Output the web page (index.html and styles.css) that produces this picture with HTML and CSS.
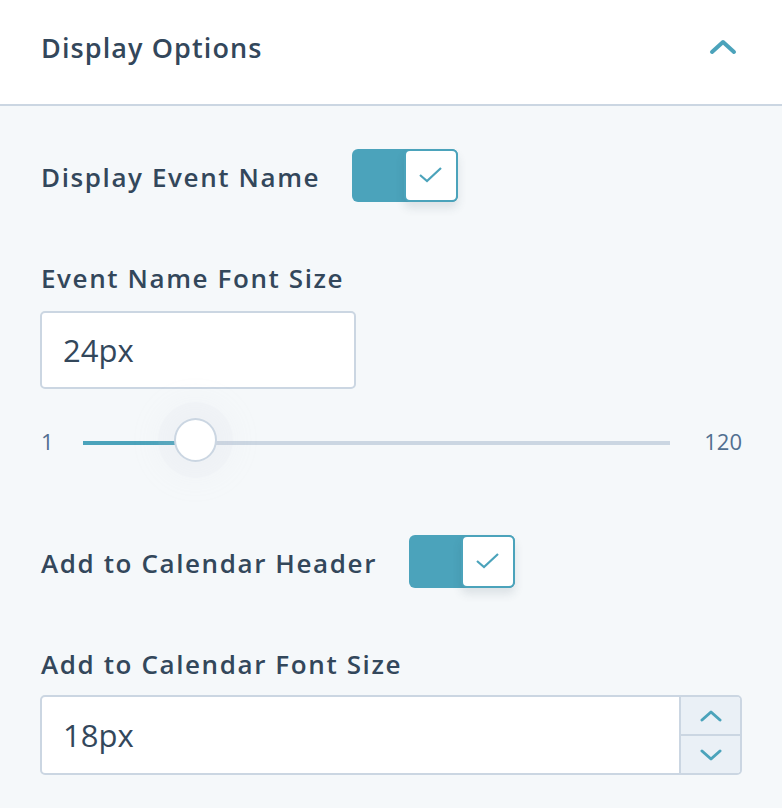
FILE: index.html
```html
<!DOCTYPE html>
<html lang="en">
<head>
    <meta charset="UTF-8">
    <title>Display Options</title>
    <link rel="stylesheet" href="styles.css">
</head>
<body>
    <div class="panel">
        <div class="panel-head">
            <h2 class="panel-title">Display Options</h2>
            <svg class="collapse" width="28" height="16" viewBox="0 0 28 16">
                <path d="M3 13 L14 3 L25 13" fill="none" stroke="#4ba3bb" stroke-width="4" stroke-linecap="round" stroke-linejoin="round"/>
            </svg>
        </div>
        <div class="panel-body">
            <div class="toggle-row first">
                <span class="label">Display Event Name</span>
                <span class="toggle">
                    <span class="knob">
                        <svg width="26" height="18" viewBox="0 0 26 18"><path d="M2 9 L9 15 L23 2" fill="none" stroke="#4ba3bb" stroke-width="2.2"/></svg>
                    </span>
                </span>
            </div>

            <div class="label field-label">Event Name Font Size</div>
            <div class="text-input short">24px</div>

            <div class="slider">
                <span class="slider-num">1</span>
                <div class="track">
                    <div class="fill" style="width: 112px"></div>
                    <div class="thumb" style="left: 112px"></div>
                </div>
                <span class="slider-num">120</span>
            </div>

            <div class="toggle-row">
                <span class="label">Add to Calendar Header</span>
                <span class="toggle">
                    <span class="knob">
                        <svg width="26" height="18" viewBox="0 0 26 18"><path d="M2 9 L9 15 L23 2" fill="none" stroke="#4ba3bb" stroke-width="2.2"/></svg>
                    </span>
                </span>
            </div>

            <div class="label field-label last">Add to Calendar Font Size</div>
            <div class="number-input">
                <div class="number-value">18px</div>
                <div class="stepper">
                    <span class="step">
                        <svg width="22" height="12" viewBox="0 0 22 12"><path d="M2 10 L11 2 L20 10" fill="none" stroke="#4ba3bb" stroke-width="3" stroke-linecap="round" stroke-linejoin="round"/></svg>
                    </span>
                    <span class="step">
                        <svg width="22" height="12" viewBox="0 0 22 12"><path d="M2 2 L11 10 L20 2" fill="none" stroke="#4ba3bb" stroke-width="3" stroke-linecap="round" stroke-linejoin="round"/></svg>
                    </span>
                </div>
            </div>
        </div>
    </div>
</body>
</html>
```

FILE: styles.css
```css
* {
    margin: 0;
    padding: 0;
    box-sizing: border-box;
}
body {
    background: #f5f8fa;
    font-family: "Open Sans", "Lato", sans-serif;
    color: #33475b;
}
.panel {
    width: 782px;
    height: 808px;
    background: #f5f8fa;
}
.panel-head {
    height: 106px;
    background: #ffffff;
    border-bottom: 2px solid #cbd6e2;
    display: flex;
    align-items: center;
    justify-content: space-between;
    padding: 0 45px 10px 41px;
}
.panel-title {
    font-size: 27px;
    font-weight: 600;
    letter-spacing: 1.1px;
    color: #33475b;
}
.panel-body {
    padding: 43px 41px 0 40px;
    display: flex;
    flex-direction: column;
    align-items: flex-start;
}
.label {
    font-size: 26px;
    font-weight: 600;
    letter-spacing: 1.6px;
    color: #33475b;
    line-height: 32px;
    padding-left: 1px;
}
.toggle-row {
    display: flex;
    align-items: center;
    gap: 32px;
    height: 52px;
}
.toggle-row .label {
    margin-top: 4px;
}
.toggle-row + .field-label {
    margin-top: 61px;
}
.toggle {
    width: 106px;
    height: 53px;
    background: #4ba3bb;
    border-radius: 6px;
    display: flex;
    justify-content: flex-end;
}
.knob {
    width: 54px;
    height: 53px;
    background: #ffffff;
    border: 2px solid #4ba3bb;
    border-radius: 6px;
    display: flex;
    align-items: center;
    justify-content: center;
    box-shadow: 0 6px 10px rgba(45, 62, 80, 0.12);
}
.field-label {
    margin-bottom: 17px;
}
.field-label.last {
    margin-bottom: 15px;
}
.text-input {
    width: 316px;
    height: 78px;
    background: #ffffff;
    border: 2px solid #cbd6e2;
    border-radius: 5px;
    font-size: 31px;
    line-height: 74px;
    padding-left: 21px;
}
.slider {
    width: 702px;
    display: flex;
    align-items: center;
    margin-top: 30px;
    height: 44px;
}
.slider-num {
    font-size: 22px;
    color: #516f90;
    width: 43px;
    padding-left: 1px;
}
.slider-num:last-child {
    width: auto;
    margin-left: 33px;
}
.track {
    flex: 1;
    height: 4px;
    background: #cbd6e2;
    position: relative;
    margin-top: 4px;
}
.fill {
    height: 4px;
    background: #4ba3bb;
}
.thumb {
    position: absolute;
    top: -23px;
    width: 43px;
    height: 44px;
    margin-left: -21px;
    border-radius: 50%;
    background: #ffffff;
    border: 2px solid #cbd6e2;
    box-shadow: 0 0 0 16px rgba(200, 210, 222, 0.06), 0 0 30px 18px rgba(200, 210, 222, 0.08);
}
.slider + .toggle-row {
    margin-top: 72px;
}
.number-input {
    width: 702px;
    height: 80px;
    display: flex;
    background: #ffffff;
    border: 2px solid #cbd6e2;
    border-radius: 5px;
    overflow: hidden;
}
.number-value {
    flex: 1;
    font-size: 31px;
    line-height: 76px;
    padding-left: 21px;
}
.stepper {
    width: 61px;
    display: flex;
    flex-direction: column;
    border-left: 2px solid #cbd6e2;
    background: #eaf0f6;
}
.step {
    flex: 1;
    display: flex;
    align-items: center;
    justify-content: center;
}
.step:first-child {
    border-bottom: 2px solid #cbd6e2;
}
```
